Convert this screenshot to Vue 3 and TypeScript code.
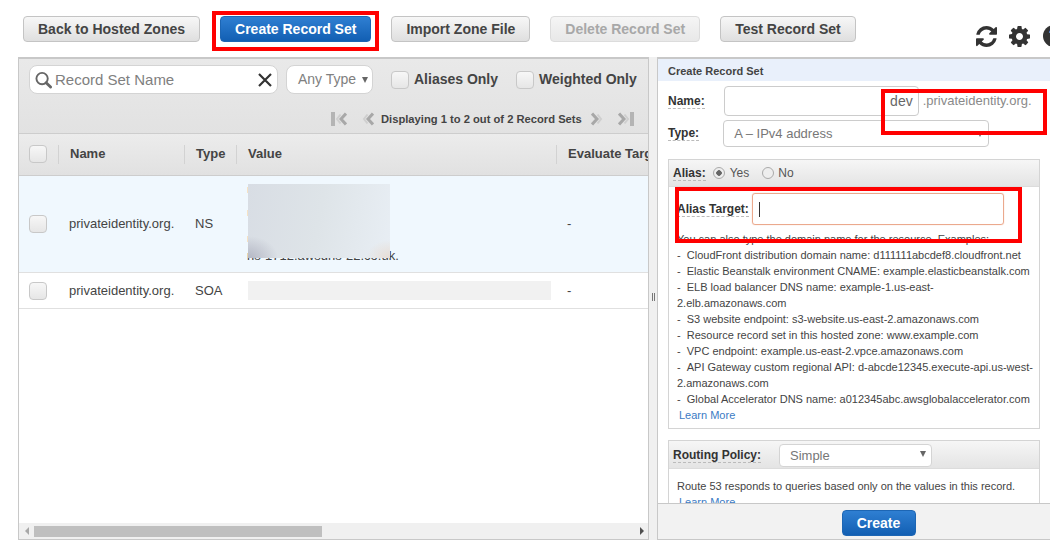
<script setup lang="ts">
const buttons = [
  { label: 'Back to Hosted Zones', kind: '' },
  { label: 'Create Record Set', kind: 'primary' },
  { label: 'Import Zone File', kind: '' },
  { label: 'Delete Record Set', kind: 'disabled' },
  { label: 'Test Record Set', kind: '' },
]
const columns = ['Name', 'Type', 'Value', 'Evaluate Target Health']
const examples = [
  'CloudFront distribution domain name: d111111abcdef8.cloudfront.net',
  'Elastic Beanstalk environment CNAME: example.elasticbeanstalk.com',
  'ELB load balancer DNS name: example-1.us-east-2.elb.amazonaws.com',
  'S3 website endpoint: s3-website.us-east-2.amazonaws.com',
  'Resource record set in this hosted zone: www.example.com',
  'VPC endpoint: example.us-east-2.vpce.amazonaws.com',
  'API Gateway custom regional API: d-abcde12345.execute-api.us-west-2.amazonaws.com',
  'Global Accelerator DNS name: a012345abc.awsglobalaccelerator.com',
]
</script>

<template>
  <div class="page">
    <header class="toolbar">
      <button v-for="b in buttons" :key="b.label" class="btn" :class="b.kind">{{ b.label }}</button>
      <div class="tools">
        <svg class="ic-refresh" viewBox="0 0 1536 1536"><path d="M1511 928q0 5-1 7-64 268-268 434.5t-478 166.5q-146 0-282.5-55t-243.5-157l-129 129q-19 19-45 19t-45-19-19-45v-448q0-26 19-45t45-19h448q26 0 45 19t19 45-19 45l-137 137q71 66 161 102t187 36q134 0 250-65t186-179q11-17 53-117 8-23 30-23h192q13 0 22.5 9.5t9.5 22.5zm25-800v448q0 26-19 45t-45 19h-448q-26 0-45-19t-19-45 19-45l138-138q-148-137-349-137-134 0-250 65t-186 179q-11 17-53 117-8 23-30 23h-199q-13 0-22.5-9.5t-9.5-22.5v-7q65-268 270-434.5t480-166.5q146 0 284 55.5t245 156.5l130-129q19-19 45-19t45 19 19 45z"/></svg>
        <svg class="ic-gear" viewBox="128 128 1536 1536"><path d="M1152 896q0-106-75-181t-181-75-181 75-75 181 75 181 181 75 181-75 75-181zm512-109v222q0 12-8 23t-20 13l-185 28q-19 54-39 91 35 50 107 138 10 12 10 25t-9 23q-27 37-99 108t-94 71q-12 0-26-9l-138-108q-44 23-91 38-16 136-29 186-7 28-36 28h-222q-14 0-24.5-8.5t-11.5-21.5l-28-184q-49-16-90-37l-141 107q-10 9-25 9-14 0-25-11-126-114-165-168-7-10-7-23 0-12 8-23 15-21 51-66.5t54-70.5q-27-50-41-99l-183-27q-13-2-21-12.5t-8-23.5v-222q0-12 8-23t19-13l186-28q14-46 39-92-40-57-107-138-10-12-10-24 0-10 9-23 26-36 98.5-107.5t94.5-71.5q13 0 26 10l138 107q44-23 91-38 16-136 29-186 7-28 36-28h222q14 0 24.5 8.5t11.5 21.5l28 184q49 16 90 37l142-107q9-9 24-9 13 0 25 10 129 119 165 170 7 8 7 22 0 12-8 23-15 21-51 66.5t-54 70.5q26 50 41 98l183 28q13 2 22 12.5t9 23.5z"/></svg>
        <span class="ic-help">?</span>
      </div>
    </header>

    <main class="main">
      <section class="list">
        <div class="filters">
          <div class="filter-row">
            <div class="search">
              <svg class="search-ic" viewBox="0 0 18 18"><circle cx="7.5" cy="7.5" r="6" fill="none" stroke="#666" stroke-width="2"/><path d="M11.8 11.8 16.5 16.5" stroke="#666" stroke-width="3" stroke-linecap="round"/></svg>
              <span class="search-text">Record Set Name</span>
              <svg class="clear-ic" viewBox="0 0 14 14"><path d="M1 1 13 13M13 1 1 13" stroke="#333" stroke-width="2.2"/></svg>
            </div>
            <div class="type-select">Any Type<i class="caret"></i></div>
            <label class="check-label"><span class="box"></span>Aliases Only</label>
            <label class="check-label weighted"><span class="box"></span>Weighted Only</label>
          </div>
          <div class="pager">
            <svg class="pg first" viewBox="0 0 16 14"><path d="M0 0h4v14H0z" fill="#b4b4b4"/><path d="M15 1.500 10 7l5 5.500" fill="none" stroke="#a8a8a8" stroke-width="3"/><path d="M9.500 2.500 6 7l3.500 4.500" fill="none" stroke="#cfcfcf" stroke-width="2"/></svg>
            <svg class="pg prev" viewBox="0 0 12 14"><path d="M11 1.500 6 7l5 5.500" fill="none" stroke="#a8a8a8" stroke-width="3"/><path d="M5.500 2.500 2 7l3.500 4.500" fill="none" stroke="#cfcfcf" stroke-width="2"/></svg>
            <span class="pg-text">Displaying 1 to 2 out of 2 Record Sets</span>
            <svg class="pg next" viewBox="0 0 12 14"><path d="M1 1.500 6 7l-5 5.500" fill="none" stroke="#a8a8a8" stroke-width="3"/><path d="M6.500 2.500 10 7l-3.500 4.500" fill="none" stroke="#cfcfcf" stroke-width="2"/></svg>
            <svg class="pg last" viewBox="0 0 16 14"><path d="M12 0h4v14h-4z" fill="#b4b4b4"/><path d="M1 1.500 6 7l-5 5.500" fill="none" stroke="#a8a8a8" stroke-width="3"/><path d="M6.500 2.500 10 7l-3.500 4.500" fill="none" stroke="#cfcfcf" stroke-width="2"/></svg>
          </div>
        </div>

        <div class="grid head">
          <div class="cell-check"><span class="box"></span></div>
          <div v-for="c in columns" :key="c" class="th">{{ c }}</div>
        </div>

        <div class="grid row selected">
          <div class="cell-check"><span class="box"></span></div>
          <div class="td lifted">privateidentity.org.</div>
          <div class="td lifted">NS</div>
          <div class="td value-cell">
            <div class="blur-tall"></div>
            <div class="ns-last">ns-1712.awsdns-22.co.uk.</div>
          </div>
          <div class="td lifted">-</div>
        </div>
        <div class="grid row short">
          <div class="cell-check"><span class="box"></span></div>
          <div class="td">privateidentity.org.</div>
          <div class="td">SOA</div>
          <div class="td"><div class="blur-wide"></div></div>
          <div class="td">-</div>
        </div>

        <div class="spacer"></div>
        <div class="hscroll">
          <i class="arrow left"></i>
          <div class="track"><div class="thumb"></div></div>
          <i class="arrow right"></i>
        </div>
      </section>

      <div class="splitter"><span class="grip"></span></div>

      <section class="editor">
        <div class="editor-title">Create Record Set</div>
        <div class="editor-scroll">
          <div class="field name-field">
            <span class="lbl">Name:</span>
            <div class="name-input">dev</div>
            <span class="suffix">.privateidentity.org.</span>
          </div>
          <div class="field type-field">
            <span class="lbl">Type:</span>
            <div class="type-input">A – IPv4 address<i class="caret"></i></div>
          </div>

          <div class="group alias">
            <div class="group-head">
              <span class="lbl">Alias:</span>
              <span class="radio on"></span><span class="radio-text yes">Yes</span>
              <span class="radio"></span><span class="radio-text">No</span>
            </div>
            <div class="alias-body">
              <div class="target-row">
                <span class="lbl">Alias Target:</span>
                <div class="target-input"><i class="text-caret"></i></div>
              </div>
              <p class="line intro">You can also type the domain name for the resource. Examples:</p>
              <p v-for="e in examples" :key="e" class="line">-&nbsp;&nbsp;{{ e }}</p>
              <a class="more">Learn More</a>
            </div>
          </div>

          <div class="group routing">
            <div class="group-head routing-head">
              <span class="lbl">Routing Policy:</span>
              <div class="policy">Simple<i class="caret"></i></div>
            </div>
            <div class="routing-body">
              <p class="line">Route 53 responds to queries based only on the values in this record.</p>
              <a class="more">Learn More</a>
            </div>
          </div>
        </div>
        <div class="editor-foot"><button class="btn primary create">Create</button></div>
      </section>
    </main>

    <div class="mark mark-create"></div>
    <div class="mark mark-name"></div>
    <div class="mark mark-alias"></div>
  </div>
</template>

<style>
html, body { margin: 0; background: #fff; overflow: hidden; }
</style>

<style scoped>
.page {
  position: relative;
  width: 1050px;
  height: 548px;
  overflow: hidden;
  display: flex;
  flex-direction: column;
  font-family: "Liberation Sans", Arial, sans-serif;
  color: #444;
  background: #fff;
}
.toolbar {
  height: 57px;
  flex: none;
  box-sizing: border-box;
  padding: 16px 0 0 23px;
  display: flex;
  align-items: flex-start;
  gap: 20px;
}
.btn {
  height: 26px;
  padding: 0 14px;
  font: bold 14px "Liberation Sans", Arial, sans-serif;
  color: #444;
  background: linear-gradient(#f7f7f7, #dfdfdf);
  border: 1px solid #c4c4c4;
  border-radius: 4px;
  white-space: nowrap;
  flex: none;
}
.btn.primary {
  color: #fff;
  background: linear-gradient(#2f7fd2, #125fb3);
  border-color: #1d66b4;
}
.btn.disabled {
  color: #a8a8a8;
  background: linear-gradient(#f5f5f5, #e8e8e8);
  border-color: #dcdcdc;
}
.tools {
  display: flex;
  align-items: center;
  flex: none;
  margin: 9px 0 0 100px;
}
.ic-refresh { width: 21px; height: 21px; fill: #333; }
.ic-gear { width: 21px; height: 21px; fill: #333; margin-left: 12px; }
.ic-help {
  width: 22px;
  height: 22px;
  margin-left: 13px;
  border-radius: 50%;
  background: #333;
  color: #fff;
  font: bold 16px/22px "Liberation Sans", Arial, sans-serif;
  text-align: center;
  flex: none;
}

.main {
  height: 483px;
  display: flex;
  flex: none;
  padding-left: 18px;
}
.list {
  width: 631px;
  box-sizing: border-box;
  display: flex;
  flex-direction: column;
  overflow: hidden;
  border: 1px solid #c8c8c8;
  border-top-width: 2px;
  flex: none;
}
.filters {
  height: 74px;
  flex: none;
  box-sizing: border-box;
  background: linear-gradient(#e9e9e9, #e2e2e2);
  padding: 6px 0 0 10px;
}
.filter-row { display: flex; align-items: center; height: 29px; }
.search {
  width: 249px;
  height: 29px;
  box-sizing: border-box;
  background: #fff;
  border: 1px solid #d4d4d4;
  border-radius: 8px;
  display: flex;
  align-items: center;
  padding: 0 2px 0 5px;
  flex: none;
}
.search-ic { width: 17px; height: 18px; flex: none; }
.search-text { margin-left: 3px; flex: 1; font-size: 15px; color: #808080; }
.clear-ic { width: 14px; height: 14px; margin-right: 3px; flex: none; }
.type-select {
  width: 87px;
  height: 29px;
  margin-left: 8px;
  box-sizing: border-box;
  background: #fff;
  border: 1px solid #d4d4d4;
  border-radius: 8px;
  font-size: 14px;
  line-height: 27px;
  padding-left: 11px;
  color: #808080;
  position: relative;
  flex: none;
}
.caret {
  position: absolute;
  width: 0;
  height: 0;
  border-left: 3.5px solid transparent;
  border-right: 3.5px solid transparent;
  border-top: 6px solid #666;
}
.type-select .caret { right: 4px; top: 11px; }
.box {
  display: inline-block;
  width: 18px;
  height: 18px;
  box-sizing: border-box;
  background: linear-gradient(#f7f7f7, #e6e6e6);
  border: 1px solid #c8c8c8;
  border-radius: 4px;
  flex: none;
}
.check-label {
  display: flex;
  align-items: center;
  gap: 5px;
  font-size: 14px;
  font-weight: bold;
  color: #444;
  margin-left: 18px;
  white-space: nowrap;
  position: relative;
  top: -1px;
}
.check-label .box { position: relative; top: 1px; }
.pager {
  display: flex;
  align-items: center;
  margin-top: 15px;
  padding-left: 302px;
  height: 20px;
}
.pg { height: 14px; flex: none; }
.pg.first { width: 16px; }
.pg.prev { width: 12px; margin-left: 15px; }
.pg-text { margin-left: 7px; font-size: 11.2px; font-weight: bold; color: #444; white-space: nowrap; }
.pg.next { width: 12px; margin-left: 9px; }
.pg.last { width: 16px; margin-left: 15px; }

.grid {
  display: grid;
  grid-template-columns: 39px 126px 52px 320px 120px;
  flex: none;
}
.head {
  height: 43px;
  box-sizing: border-box;
  align-items: center;
  background: linear-gradient(#ececec, #e1e1e1);
  border-top: 1px solid #cdcdcd;
  border-bottom: 1px solid #cdcdcd;
  padding-bottom: 1px;
}
.cell-check { padding-left: 10px; display: flex; align-items: center; }
.th {
  height: 19px;
  padding-left: 11px;
  border-left: 1px solid #d2d2d2;
  font-size: 13px;
  font-weight: bold;
  line-height: 18px;
  white-space: nowrap;
  overflow: hidden;
}
.row {
  align-items: center;
  border-bottom: 1px solid #e0e0e0;
  box-sizing: border-box;
  height: 97px;
}
.row.selected { background: #f0f8fe; }
.row.short { height: 36px; }
.td { padding-left: 11px; font-size: 13px; color: #444; white-space: nowrap; }
.td.lifted { margin-bottom: 2px; }
.value-cell { position: relative; height: 96px; }
.ns-last {
  position: absolute;
  left: 11px;
  top: 73px;
  font-size: 13px;
  line-height: 14px;
}
.blur-tall {
  position: absolute;
  left: 12px;
  top: 8px;
  width: 142px;
  height: 74px;
  background:
    radial-gradient(ellipse 30px 22px at 0% 100%, #b4b7c4 0%, rgba(180, 183, 196, 0) 100%),
    radial-gradient(ellipse 24px 18px at 100% 100%, #e8ddd4 0%, rgba(232, 221, 212, 0) 100%),
    linear-gradient(100deg, #d8dde4 0%, #dee4e8 50%, #e8eef4 100%);
  z-index: 1;
}
.blur-tall::before {
  content: "";
  position: absolute;
  left: -1px;
  top: 3px;
  width: 1px;
  height: 71px;
  background: linear-gradient(#f6e2c4 0 6px, transparent 6px 23px, #f6e2c4 23px 29px, transparent 29px 49px, #f6e2c4 49px 55px, transparent 55px);
}
.blur-wide {
  width: 303px;
  height: 19px;
  margin-left: 1px;
  background: #f1f1f1;
}
.spacer { flex: 1; }
.hscroll {
  height: 16px;
  flex: none;
  background: #f0f0f0;
  display: flex;
  align-items: center;
  padding: 0 4px 0 6px;
}
.track { flex: 1; height: 11px; margin: 0 2px 0 1px; padding-left: 4px; }
.thumb { width: 288px; height: 11px; background: #bfbfbf; }
.arrow { width: 0; height: 0; border-top: 4px solid transparent; border-bottom: 4px solid transparent; flex: none; }
.arrow.left { border-right: 4px solid #a8a8a8; }
.arrow.right { border-left: 4px solid #505050; }

.splitter {
  width: 8px;
  flex: none;
  background: #f0f0f0;
  position: relative;
}
.grip {
  position: absolute;
  left: 3px;
  top: 236px;
  width: 1px;
  height: 8px;
  border-left: 1px solid #777;
  border-right: 1px solid #777;
}

.editor {
  width: 393px;
  box-sizing: border-box;
  flex: none;
  display: flex;
  flex-direction: column;
  border-left: 1px solid #c8c8c8;
  border-top: 2px solid #c8c8c8;
  overflow: hidden;
}
.editor-title {
  height: 22px;
  flex: none;
  background: #e9f0fb;
  padding-left: 10px;
  font-size: 11px;
  font-weight: bold;
  line-height: 24px;
  color: #444;
}
.editor-scroll { flex: 1; overflow: hidden; min-height: 0; padding: 5px 10px 0 10px; }
.lbl {
  font-size: 12px;
  font-weight: bold;
  color: #333;
  border-bottom: 1px dashed #bbb;
  line-height: 14px;
  white-space: nowrap;
}
.field { display: flex; align-items: center; }
.name-input {
  width: 195px;
  height: 30px;
  margin-left: 19px;
  box-sizing: border-box;
  border: 1px solid #ccc;
  border-radius: 4px;
  font-size: 14px;
  line-height: 28px;
  text-align: right;
  padding-right: 5px;
  color: #666;
}
.suffix { margin-left: 4px; font-size: 13px; color: #8a8a8a; position: relative; top: -1px; }
.type-field { margin-top: 4px; }
.type-input {
  width: 266px;
  height: 27px;
  margin-left: 24px;
  box-sizing: border-box;
  border: 1px solid #ccc;
  border-radius: 4px;
  font-size: 13px;
  line-height: 25px;
  padding-left: 10px;
  color: #777;
  position: relative;
}
.type-input .caret { right: 5px; top: 10px; }
.group {
  width: 372px;
  box-sizing: border-box;
  border: 1px solid #d4d4d4;
}
.alias { margin-top: 12px; height: 270px; }
.routing { margin-top: 11px; }
.group-head {
  height: 27px;
  box-sizing: border-box;
  display: flex;
  align-items: center;
  padding-left: 4px;
  background: linear-gradient(#f6f6f6, #e4e4e4);
  border-bottom: 1px solid #dcdcdc;
}
.routing-head { height: 28px; padding-top: 2px; }
.radio {
  width: 12px;
  height: 12px;
  box-sizing: border-box;
  margin-left: 7px;
  border: 1px solid #aaa;
  border-radius: 50%;
  background: #eee;
  flex: none;
}
.radio.on {
  background: radial-gradient(circle, #666 0 2.500px, #eee 3px);
}
.radio-text { margin: 0 5px 0 4px; font-size: 12px; color: #555; padding-right: 2px; }
.radio-text.yes { margin-left: 5px; margin-right: 4px; }
.alias-body { padding: 6px 6px 0 8px; }
.target-row { display: flex; align-items: center; }
.target-input {
  width: 252px;
  height: 32px;
  box-sizing: border-box;
  margin-left: 3px;
  border: 1px solid #eba98d;
  border-radius: 3px;
  box-shadow: 0 0 1px #eba98d;
  display: flex;
  align-items: center;
  padding-left: 6px;
}
.text-caret { width: 1px; height: 15px; background: #333; }
.line { margin: 0; font-size: 11px; line-height: 16px; color: #444; }
.intro { margin-top: 6px; }
.more { display: block; font-size: 11px; line-height: 16px; color: #3b7bc4; padding-left: 2px; }
.policy {
  width: 153px;
  height: 23px;
  margin-left: 18px;
  box-sizing: border-box;
  background: #fff;
  border: 1px solid #d4d4d4;
  border-radius: 4px;
  font-size: 13px;
  line-height: 22px;
  padding-left: 10px;
  color: #777;
  position: relative;
}
.policy .caret { right: 5px; top: 6px; }
.routing-body { padding: 9px 8px 0 8px; }
.editor-foot {
  height: 37px;
  flex: none;
  box-sizing: border-box;
  background: #f2f2f2;
  border-top: 1px solid #c8c8c8;
  border-bottom: 1px solid #c8c8c8;
  display: flex;
  justify-content: center;
  padding: 6px 0 0 49px;
}
.create { width: 74px; padding: 0; }

.mark {
  position: absolute;
  box-sizing: border-box;
  border: 4px solid #f00;
  pointer-events: none;
}
.mark-create { left: 212px; top: 11px; width: 167px; height: 40px; }
.mark-name { left: 881px; top: 89px; width: 166px; height: 46px; }
.mark-alias { left: 675px; top: 187px; width: 347px; height: 56px; }
</style>
